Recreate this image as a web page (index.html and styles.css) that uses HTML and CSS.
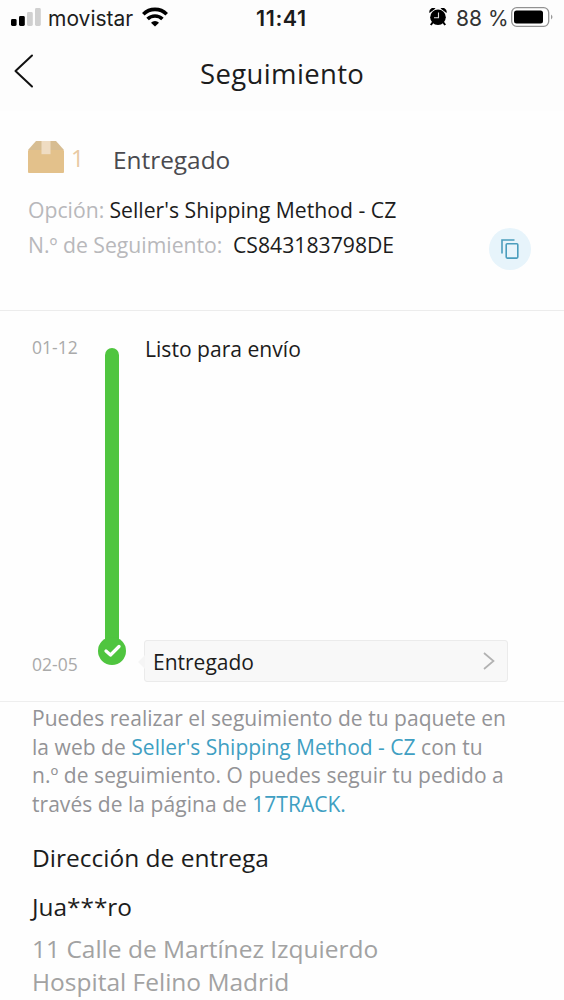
FILE: index.html
```html
<!DOCTYPE html>
<html lang="es">
<head>
<meta charset="utf-8">
<title>Seguimiento</title>
<link rel="stylesheet" href="styles.css">
</head>
<body>
<div class="screen">
  <header class="top">
    <div class="status">
      <svg class="signal" width="30" height="20" viewBox="0 0 30 20"><rect x="0" y="11" width="5.600" height="7" rx="1.400"/><rect x="8" y="8" width="5.800" height="10" rx="1.400"/><g fill="#d0d0d0"><rect x="16" y="4" width="5.800" height="14" rx="1.400"/><rect x="24" y="0" width="5.800" height="18" rx="1.400"/></g></svg>
      <span class="carrier">movistar</span>
      <svg class="wifi" width="26" height="20" viewBox="0 0 26 20" fill="none" stroke="#000" stroke-width="3.600"><path d="M1.300 7.200a16.500 16.500 0 0 1 23.400 0"/><path d="M5.600 12a10.600 10.600 0 0 1 14.800 0"/><path d="M9 15.800a5.500 5.500 0 0 1 8 0L13 19.500z" fill="#000" stroke="none"/></svg>
      <span class="clock">11:41</span>
      <svg class="alarm" width="18" height="18" viewBox="0 0 18 18"><path d="M0.500 5A4 4 0 0 1 6.500 .5zM17.500 5A4 4 0 0 0 11.500 .5z"/><circle cx="9" cy="9.200" r="7.800"/><path d="M4 14l-2.200 3M14 14l2.200 3" stroke="#000" stroke-width="2"/><path d="M9.500 4.500v5.200H5" fill="none" stroke="#ddd" stroke-width="1.100"/></svg>
      <span class="percent">88 %</span>
      <svg class="battery" width="43" height="20" viewBox="0 0 43 20"><rect x=".7" y=".7" width="37" height="18.600" rx="5" fill="#fff" stroke="#929292" stroke-width="1.300"/><rect x="3" y="3.500" width="29" height="13" rx="2.500"/><path d="M40 7.500q3 2.500 0 5z" fill="#999"/></svg>
    </div>
    <nav class="nav">
      <svg class="back" width="20" height="34" viewBox="0 0 20 34" fill="none" stroke="#111" stroke-width="2" stroke-linecap="round" stroke-linejoin="round"><path d="M18 1.500L1.500 17L18 32.500"/></svg>
      <h1 class="title">Seguimiento</h1>
    </nav>
  </header>

  <section class="summary">
    <div class="state">
      <svg class="box" width="36" height="32" viewBox="0 0 36 32"><path d="M0 9L8 0h20l8 9z" fill="#d7bd92"/><rect y="9" width="36" height="23" rx="1" fill="#e3c18b"/><path d="M13.500 0h9v13.200h-9z" fill="#efdcc2"/></svg>
      <span class="count">1</span>
      <span class="state-name">Entregado</span>
    </div>
    <div class="facts">
      <dl class="fact-list">
        <div class="fact"><dt class="option-key">Opción:</dt><dd class="option-value">Seller's Shipping Method - CZ</dd></div>
        <div class="fact"><dt class="number-key">N.º de Seguimiento:</dt><dd class="number-value">CS843183798DE</dd></div>
      </dl>
      <button class="copy" aria-label="Copiar"><svg width="18" height="20" viewBox="0 0 18 20" fill="none" stroke="#4b9dbd" stroke-width="1.600"><path d="M1 14.500V1h12.500"/><rect x="5.200" y="4.800" width="11.600" height="14.300" rx="1"/></svg></button>
    </div>
  </section>

  <section class="timeline">
    <div class="dates"><span class="date">01-12</span><span class="date">02-05</span></div>
    <div class="track"><div class="bar"></div><div class="check"><svg width="17" height="14" viewBox="0 0 17 14" fill="none" stroke="#fff" stroke-width="3.200" stroke-linecap="round" stroke-linejoin="round"><path d="M2 7l4.500 4L15 2.500"/></svg></div></div>
    <div class="events">
      <div class="event-first">Listo para envío</div>
      <div class="event-last"><svg class="notch" width="7" height="14" viewBox="0 0 7 14"><path d="M7 0L0 7l7 7z" fill="#f5f5f5"/></svg><span class="event-name">Entregado</span><svg width="12" height="18" viewBox="0 0 12 18" fill="none" stroke="#b2b2b2" stroke-width="1.700"><path d="M1 1l9.500 8L1 17"/></svg></div>
    </div>
  </section>

  <section class="details">
    <p class="note">Puedes realizar el seguimiento de tu paquete en<br>la web de <a class="link">Seller's Shipping Method - CZ</a> con tu<br>n.º de seguimiento. O puedes seguir tu pedido a<br>través de la página de <a class="link">17TRACK.</a></p>
    <h2 class="heading">Dirección de entrega</h2>
    <p class="name">Jua***ro</p>
    <p class="address">11 Calle de Martínez Izquierdo<br>Hospital Felino Madrid</p>
  </section>
</div>
</body>
</html>
```
FILE: styles.css
```css
* { box-sizing: border-box; }
body { margin: 0; background: #fff; font-family: "Open Sans", "Noto Sans", sans-serif; color: #1c1c1c; }
.screen { width: 564px; height: 1000px; overflow: hidden; background: #fefefe; white-space: nowrap; }
h1, h2, p, dl, dd { margin: 0; font-weight: 400; }
svg { display: block; flex: none; }

.top { height: 111px; background: #fdfdfd; }
.status { display: flex; height: 36px; padding-left: 11px; font-family: Inter, sans-serif; font-size: 21px; line-height: 37px; }
.signal { margin-top: 8px; }
.carrier { width: 86px; margin-left: 7px; }
.wifi { margin: 7px 0 0 8px; }
.clock { width: 60px; margin-left: 88px; font-weight: 600; font-size: 21.500px; letter-spacing: 0.6px; }
.alarm { margin: 8px 0 0 113px; }
.percent { width: 54px; margin-left: 9px; color: #333; }
.battery { margin: 7px 0 0 1px; }

.nav { display: flex; padding-left: 14px; }
.back { margin-top: 18px; }
.title { margin-left: 166px; padding-top: 18px; font-size: 27.500px; line-height: 40px; letter-spacing: 0.36px; }

.summary { height: 200px; border-bottom: 1px solid #ececec; }
.state { display: flex; height: 82px; padding: 29px 0 0 28px; }
.box { margin-top: 1px; }
.count { width: 42px; margin: -2px 0 0 7px; font-size: 23px; line-height: 40px; color: #e8c9a2; }
.state-name { font-size: 24.400px; line-height: 40px; color: #4a4a4f; }
.facts { display: flex; justify-content: space-between; padding: 0 33px 0 28px; }
.fact { display: flex; height: 35px; font-size: 21.200px; line-height: 34px; }
.option-key, .number-key { color: #b8b8bb; }
.option-key { width: 81.500px; }
.number-key { width: 205px; }
.copy { display: flex; align-items: center; justify-content: center; width: 42px; height: 42px; margin-top: 35px; padding: 0; border: 0; border-radius: 50%; background: #e7f4fb; }

.timeline { display: flex; height: 391px; padding-left: 32px; border-bottom: 1px solid #eee; }
.dates { display: flex; flex-direction: column; gap: 287px; width: 66px; padding-top: 21px; }
.date { font-size: 17.500px; line-height: 30px; color: #aaa; }
.track { display: flex; flex-direction: column; align-items: center; width: 28px; padding-top: 37px; }
.bar { width: 14px; height: 292px; border-radius: 7px 7px 0 0; background: #4fc53f; }
.check { display: flex; align-items: center; justify-content: center; width: 28px; height: 28px; margin-top: -3px; border-radius: 50%; background: #4fc53f; }
.events { display: flex; flex-direction: column; gap: 273px; padding: 20px 0 0 18px; }
.event-first { padding-left: 1px; font-size: 21.100px; line-height: 36px; }
.event-last { position: relative; display: flex; align-items: center; justify-content: space-between; width: 364px; height: 42px; padding: 0 12px 0 8px; border: 1px solid #ebebeb; border-radius: 3px; background: #f8f8f8; font-size: 21px; line-height: 38px; }
.event-name { padding-top: 2px; }
.notch { position: absolute; left: -7px; top: 14px; }

.details { padding: 2px 0 0 32px; }
.note { font-size: 21px; line-height: 28.700px; letter-spacing: 0.045px; color: #939396; }
.link { color: #3f9fc2; letter-spacing: 0; }
.heading { margin-top: 19px; font-size: 24.500px; line-height: 40px; }
.name { margin-top: 9px; font-size: 24.400px; line-height: 40px; }
.address { margin-top: 5px; font-size: 24.500px; line-height: 33.500px; color: #a2a2a2; }
```
